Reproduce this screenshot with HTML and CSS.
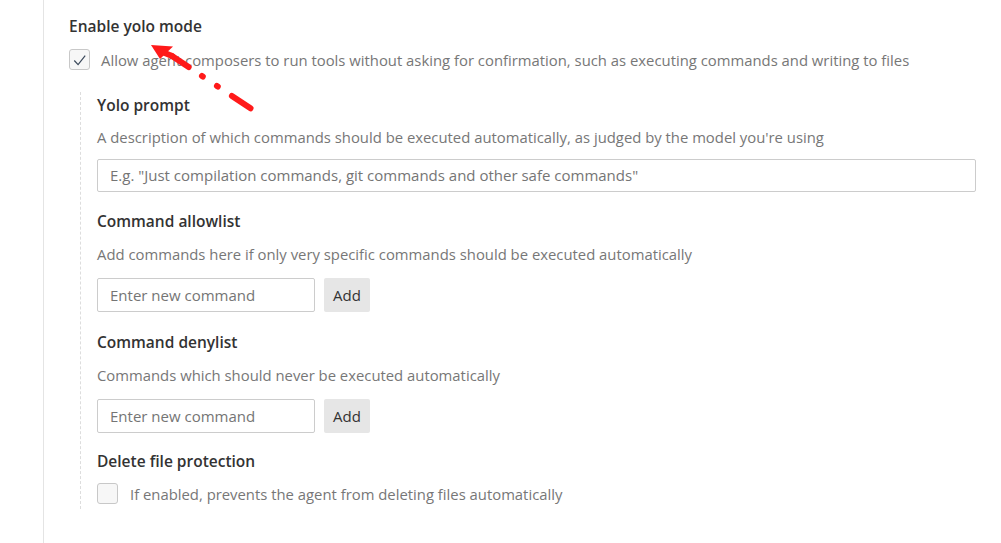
FILE: index.html
```html
<!DOCTYPE html>
<html>
<head>
<meta charset="utf-8">
<link rel="stylesheet" href="styles.css">
</head>
<body>
<div class="page">
  <div class="panel">
    <h3 class="title">Enable yolo mode</h3>
    <label class="check-row">
      <span class="box"><svg viewBox="0 0 20 20" width="20" height="20"><path d="M4.5 10.5 L8.5 14.8 L16 5.5" fill="none" stroke="#3c4a5c" stroke-width="1.3"/></svg></span>
      <span class="check-text">Allow agent composers to run tools without asking for confirmation, such as executing commands and writing to files</span>
    </label>
    <div class="nested">
      <h4 class="sub first">Yolo prompt</h4>
      <p class="desc tight">A description of which commands should be executed automatically, as judged by the model you're using</p>
      <div class="input wide">E.g. "Just compilation commands, git commands and other safe commands"</div>

      <h4 class="sub after-wide">Command allowlist</h4>
      <p class="desc">Add commands here if only very specific commands should be executed automatically</p>
      <div class="add-row">
        <div class="input short">Enter new command</div>
        <button class="btn">Add</button>
      </div>

      <h4 class="sub">Command denylist</h4>
      <p class="desc">Commands which should never be executed automatically</p>
      <div class="add-row">
        <div class="input short">Enter new command</div>
        <button class="btn">Add</button>
      </div>

      <h4 class="sub last">Delete file protection</h4>
      <label class="check-row inner">
        <span class="box"></span>
        <span class="check-text">If enabled, prevents the agent from deleting files automatically</span>
      </label>
    </div>
  </div>
  <svg class="arrow" width="1001" height="543" viewBox="0 0 1001 543">
    <line x1="172" y1="56" x2="250.5" y2="108.3" stroke="#ff1a1a" stroke-width="6" stroke-linecap="round" stroke-dasharray="20 16 1 17 1 17 40"/>
    <polygon points="151,45 173,46.5 160,59" fill="#ff1a1a"/>
    <line x1="160" y1="51" x2="172" y2="56" stroke="#ff1a1a" stroke-width="6" stroke-linecap="round"/>
  </svg>
</div>
</body>
</html>
```

FILE: styles.css
```css
html, body {
  margin: 0;
  padding: 0;
  background: #ffffff;
}
body {
  font-family: "Open Sans", "Segoe UI", "Noto Sans", sans-serif;
  color: #333333;
  width: 1001px;
  height: 543px;
  overflow: hidden;
}
.page {
  position: relative;
  height: 543px;
  padding-left: 43px;
}
.panel {
  border-left: 1px solid #e4e4e4;
  height: 543px;
  padding-left: 25px;
  padding-top: 16px;
  box-sizing: border-box;
}
.title {
  margin: 0;
  font-size: 15.5px;
  line-height: 20px;
  font-weight: 600;
  color: #333333;
}
.check-row {
  display: flex;
  align-items: center;
  gap: 11px;
  margin-top: 13px;
  height: 21px;
}
.box {
  width: 19px;
  height: 19px;
  border: 1px solid #c8c8c8;
  border-radius: 3px;
  background: #f7f7f7;
  display: flex;
  align-items: center;
  justify-content: center;
  flex: none;
}
.check-text {
  font-size: 14.85px;
  line-height: 20px;
  color: #777777;
  white-space: nowrap;
}
.nested {
  margin-top: 22px;
  margin-left: 11px;
  border-left: 1px dashed #dddddd;
  padding-left: 16px;
  padding-bottom: 5px;
  width: 879px;
}
.sub {
  margin: 20px 0 0 0;
  font-size: 15.5px;
  line-height: 20px;
  font-weight: 600;
  color: #333333;
}
.sub.first {
  margin-top: 0;
  padding-top: 3px;
}
.sub.after-wide {
  margin-top: 19px;
}
.sub.last {
  margin-top: 18px;
}
.desc {
  margin: 13px 0 0 0;
  font-size: 14.85px;
  line-height: 20px;
  color: #777777;
  white-space: nowrap;
}
.desc.tight {
  margin-top: 12px;
}
.input {
  box-sizing: border-box;
  height: 34px;
  border: 1px solid #cccccc;
  border-radius: 2px;
  padding: 0 12px;
  font-size: 15px;
  line-height: 32px;
  color: #757575;
  white-space: nowrap;
  background: #fff;
}
.input.wide {
  margin-top: 12px;
  width: 879px;
  height: 33px;
  line-height: 31px;
}
.add-row {
  display: flex;
  gap: 9px;
  margin-top: 14px;
}
.input.short {
  width: 218px;
}
.btn {
  height: 34px;
  width: 46px;
  border: none;
  border-radius: 2px;
  background: #e6e6e6;
  color: #333333;
  font-family: inherit;
  font-size: 15px;
  padding: 0;
}
.check-row.inner {
  margin-top: 12px;
  gap: 12px;
}
.arrow {
  position: absolute;
  left: 0;
  top: 0;
}
```
